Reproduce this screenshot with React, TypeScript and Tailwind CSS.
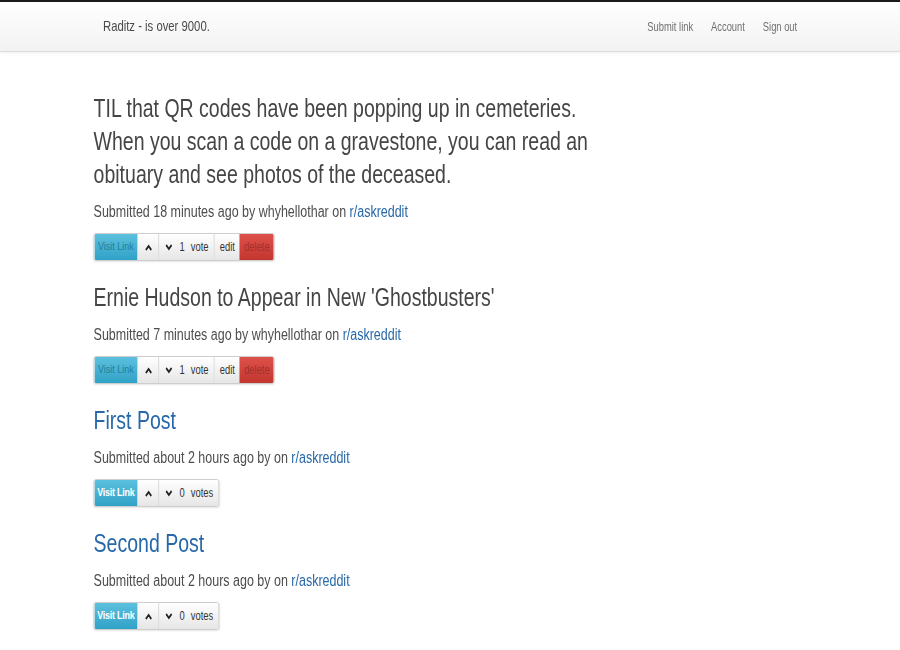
import React from 'react';

type Post = {
  title: string;
  link?: boolean;
  meta: string;
  count: string;
  unit: string;
  own: boolean;
};

const POSTS: Post[] = [
  {
    title: 'TIL that QR codes have been popping up in cemeteries. When you scan a code on a gravestone, you can read an obituary and see photos of the deceased.',
    meta: 'Submitted 18 minutes ago by whyhellothar on',
    count: '1',
    unit: 'vote',
    own: true,
  },
  {
    title: "Ernie Hudson to Appear in New 'Ghostbusters'",
    meta: 'Submitted 7 minutes ago by whyhellothar on',
    count: '1',
    unit: 'vote',
    own: true,
  },
  {
    title: 'First Post',
    link: true,
    meta: 'Submitted about 2 hours ago by on',
    count: '0',
    unit: 'votes',
    own: false,
  },
  {
    title: 'Second Post',
    link: true,
    meta: 'Submitted about 2 hours ago by on',
    count: '0',
    unit: 'votes',
    own: false,
  },
];

function Chevron({ up }: { up?: boolean }) {
  return (
    <svg width="9" height="7" viewBox="0 0 9 7" className="text-[#222] shrink-0">
      <path
        d={up ? 'M1 6 L4.5 2 L8 6' : 'M1 1 L4.5 5 L8 1'}
        fill="none"
        stroke="currentColor"
        strokeWidth="2"
      />
    </svg>
  );
}

function Buttons({ post }: { post: Post }) {
  const plain = 'flex items-center h-full border-l border-[#cfcfcf] bg-gradient-to-b from-white to-[#e6e6e6] text-[#333]';
  return (
    <div className="flex h-[28px] w-fit text-[12px] rounded-[3px] border border-[#c8c8c8] overflow-hidden shadow-[0_1px_2px_rgba(0,0,0,0.1)]">
      <div
        className={`flex items-center justify-center w-[55px] h-full bg-gradient-to-b from-[#5bc0de] to-[#2fa2c7] ${
          post.own ? 'text-[#237f9d] text-[11.5px]' : 'text-white text-[11.5px] font-bold tracking-[-0.3px]'
        }`}
      >
        Visit Link
      </div>
      <div className={`${plain} w-[27px] justify-center`}>
        <Chevron up />
      </div>
      <div className={`${plain} pl-[8px] pr-[7px]`}>
        <Chevron />
        <span className="ml-[9px]">{post.count}</span>
        <span className="ml-[8px]">{post.unit}</span>
      </div>
      {post.own && (
        <>
          <div className={`${plain} w-[33px] justify-center`}>edit</div>
          <div className="flex items-center justify-center w-[44px] h-full bg-gradient-to-b from-[#de514b] to-[#c2362f] text-[#a3302b]">
            delete
          </div>
        </>
      )}
    </div>
  );
}

export default function App() {
  return (
    <div className="w-[900px] overflow-hidden bg-white">
      {/* the whole page is drawn condensed, as in the screenshot */}
      <div className="w-[1154px] min-h-[650px] origin-top-left scale-x-[0.78] font-['Liberation_Sans',Arial,sans-serif] border-t-2 border-[#1c1c1c]">
        {/* Navbar */}
        <div className="h-[50px] bg-gradient-to-b from-white to-[#f2f2f2] border-b border-[#dcdcdc] shadow-[0_1px_4px_rgba(0,0,0,0.07)]">
          <div className="flex items-center justify-between h-full pl-[132px] pr-[132px]">
            <span className="text-[14.5px] text-[#4a4a4a]">Raditz - is over 9000.</span>
            <nav className="flex gap-[23px] text-[12px] text-[#707070]">
              <span>Submit link</span>
              <span>Account</span>
              <span>Sign out</span>
            </nav>
          </div>
        </div>

        {/* Posts */}
        <div className="pl-[120px] pt-[40px]">
          {POSTS.map((post, i) => (
            <div key={i} className="mb-[20px]">
              <h2
                className={`max-w-[650px] text-[25px] leading-[33px] ${
                  post.link ? 'text-[#2868a8]' : 'text-[#454545]'
                }`}
              >
                {post.title}
              </h2>
              <p className="text-[16px] leading-[22px] text-[#4d4d4d] mt-[10px] mb-[10px]">
                {post.meta} <span className="text-[#2868a8]">r/askreddit</span>
              </p>
              <Buttons post={post} />
            </div>
          ))}
        </div>
      </div>
    </div>
  );
}
